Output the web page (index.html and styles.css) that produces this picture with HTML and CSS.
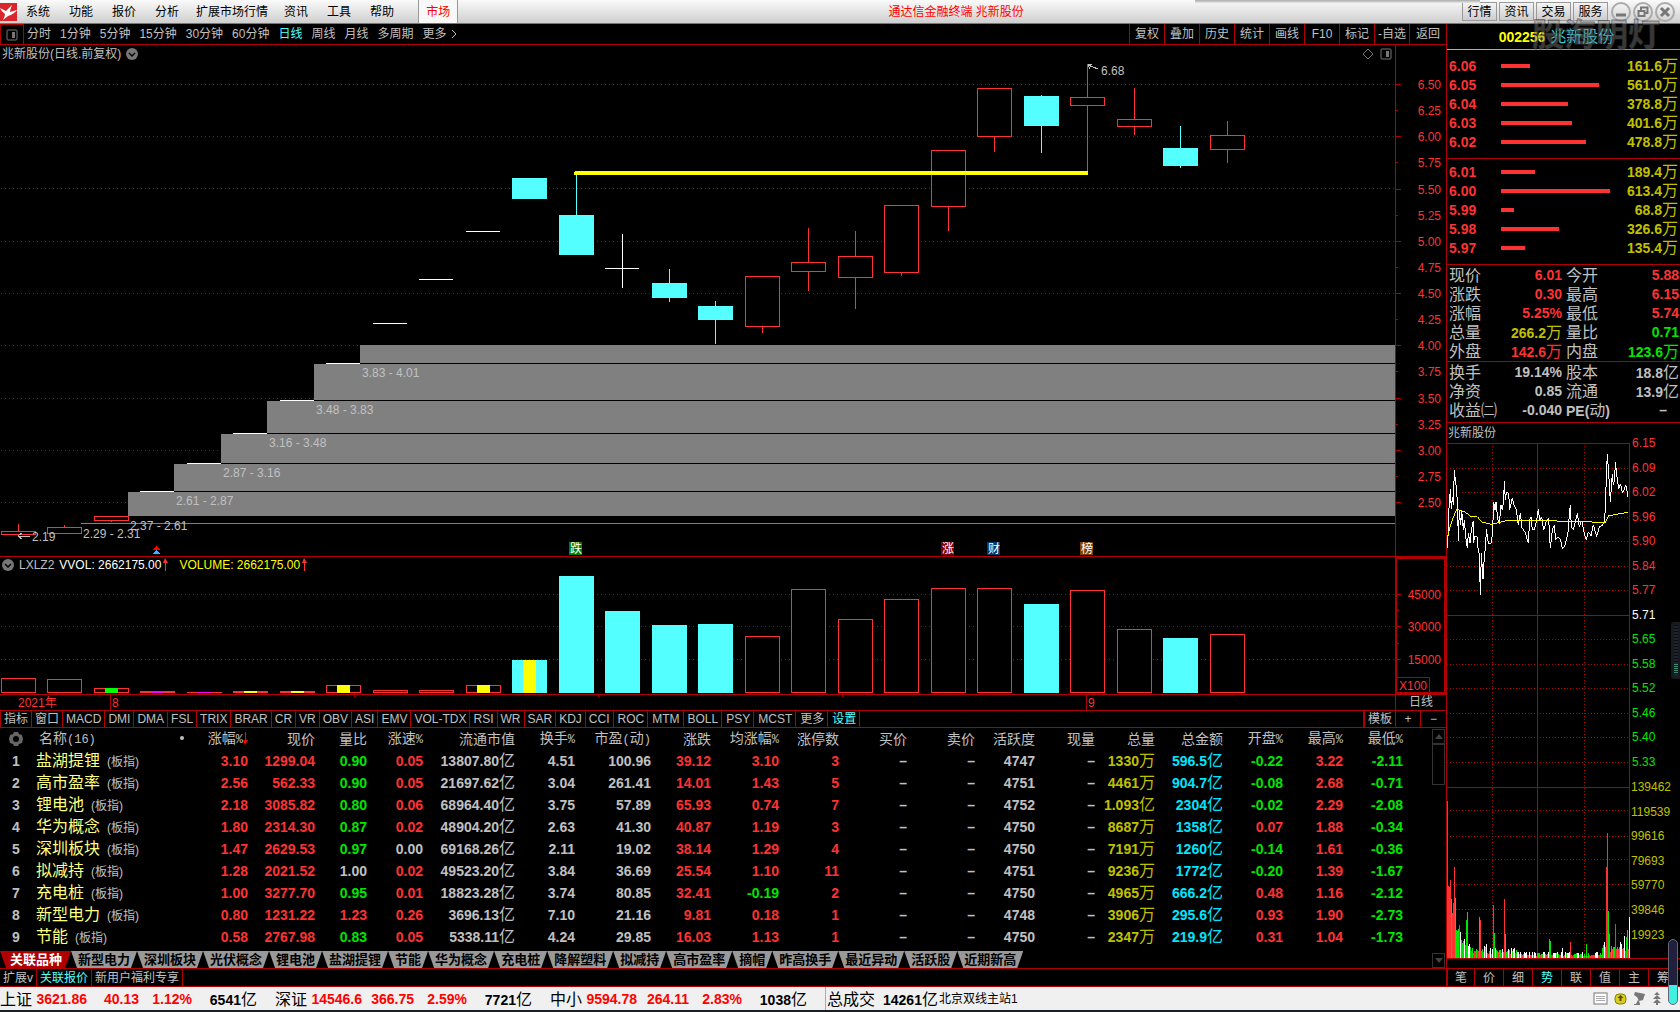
FILE: index.html
```html
<!DOCTYPE html>
<html lang="zh-CN">
<head>
<meta charset="utf-8">
<title>通达信金融终端 兆新股份</title>
<link rel="stylesheet" href="styles.css">
</head>
<body>
<header class="titlebar">
  <svg class="logo" viewBox="0 0 17 18" aria-hidden="true"><rect width="17" height="18" fill="#d8262c"/><path d="M0 5L6 8Q8 6 12 2Q10 7 10 9L17 7Q14 11 8 13L3 17Q5 13 5 11Q1 8 0 5Z" fill="#fff"/></svg>
  <nav class="menu">
    <button>系统</button><button>功能</button><button>报价</button><button>分析</button><button class="wide">扩展市场行情</button><button>资讯</button><button>工具</button><button>帮助</button><button class="market">市场</button>
  </nav>
  <h1>通达信金融终端 兆新股份</h1>
  <div class="winbuttons">
    <button>行情</button><button>资讯</button><button>交易</button><button>服务</button>
  </div>
  <div class="winctl">
    <button aria-label="最小化"><svg viewBox="0 0 22 22"><circle cx="11" cy="11" r="9"/><path d="M6 14H16" stroke-width="3"/></svg></button>
    <button aria-label="还原"><svg viewBox="0 0 22 22"><circle cx="11" cy="11" r="9"/><path d="M9 9V6.500H15.500V12H13M6.500 10H12.500V15H6.500Z" stroke-width="2"/></svg></button>
    <button aria-label="关闭"><svg viewBox="0 0 22 22"><circle cx="11" cy="11" r="9"/><path d="M7 7L15 15M15 7L7 15" stroke-width="3"/></svg></button>
  </div>
  <div class="watermark">股海明灯</div>
</header>

<main class="workspace">
  <section class="left">
    <div class="toolbar">
      <button class="panelbtn" aria-label="面板"><svg viewBox="0 0 12 12"><rect x="1" y="1" width="10" height="10" rx="1" fill="none" stroke="#777" stroke-width="1"/><rect x="6" y="3" width="3" height="6" fill="#777"/></svg></button>
      <div class="periods">
        <button>分时</button><button>1分钟</button><button>5分钟</button><button>15分钟</button><button>30分钟</button><button>60分钟</button><button class="on">日线</button><button>周线</button><button>月线</button><button>多周期</button><button>更多<svg class="chev" viewBox="0 0 6 10"><path d="M1 1L5 5L1 9" fill="none" stroke="#c0c0c0"/></svg></button>
      </div>
      <div class="actions">
        <button>复权</button><button>叠加</button><button>历史</button><button>统计</button><button>画线</button><button>F10</button><button>标记</button><button>-自选</button><button>返回</button>
      </div>
    </div>

    <div class="pane price">
      <div class="plot">
        <div class="legend">
          <span>兆新股份(日线.前复权)</span>
          <svg class="drop" viewBox="0 0 12 12"><circle cx="6" cy="6" r="6" fill="#777"/><path d="M3 5L6 8L9 5" fill="none" stroke="#000" stroke-width="1.500"/></svg>
          <span class="tools"><svg viewBox="0 0 30 12"><path d="M6 1L11 6L6 11L1 6Z" fill="none" stroke="#777"/><rect x="19" y="1" width="10" height="10" rx="1" fill="none" stroke="#777"/><rect x="24" y="3" width="3" height="6" fill="#777"/></svg></span>
        </div>
        <svg id="kline" class="kline"></svg>
      </div>
      <svg id="priceAxis" class="axis"></svg>
    </div>

    <div class="pane volume">
      <div class="plot">
        <div class="legend">
          <svg class="drop" viewBox="0 0 12 12"><circle cx="6" cy="6" r="6" fill="#777"/><path d="M3 5L6 8L9 5" fill="none" stroke="#000" stroke-width="1.500"/></svg>
          <span>LXLZ2</span>
          <span class="white">VVOL: 2662175.00<svg class="up" viewBox="0 0 5 13"><path d="M2 0L5 5H3V13H2V5H0Z" fill="#ff3232"/></svg></span>
          <span class="yellow">VOLUME: 2662175.00<svg class="up" viewBox="0 0 5 13"><path d="M2 0L5 5H3V13H2V5H0Z" fill="#ff3232"/></svg></span>
        </div>
        <svg id="vol" class="vol"></svg>
      </div>
      <div class="volaxis"><svg id="volAxis" class="axis"></svg><span class="x100">X100</span></div>
    </div>

    <div class="pane dates">
      <svg id="dates" class="datesvg"></svg>
      <div class="period">日线</div>
    </div>

    <div class="indicators">
      <button>指标</button><button>窗口</button><button>MACD</button><button>DMI</button><button>DMA</button><button>FSL</button><button>TRIX</button><button>BRAR</button><button>CR</button><button>VR</button><button>OBV</button><button>ASI</button><button>EMV</button><button>VOL-TDX</button><button>RSI</button><button>WR</button><button>SAR</button><button>KDJ</button><button>CCI</button><button>ROC</button><button>MTM</button><button>BOLL</button><button>PSY</button><button>MCST</button><button>更多</button><button class="on">设置</button>
      <div class="template"><button>模板</button><button>+</button><button>−</button></div>
    </div>

    <div class="quotes">
      <div class="quotemain">
        <table>
          <colgroup><col class="w-no"><col class="w-name"><col class="w68"><col class="w67"><col class="w52"><col class="w56"><col class="w92"><col class="w60"><col class="w76"><col class="w60"><col class="w68"><col class="w60"><col class="w68"><col class="w68"><col class="w60"><col class="w60"><col class="w60"><col class="w68"><col class="w60"><col class="w60"><col class="w60"><col></colgroup>
          <thead><tr>
            <th><svg class="gear" viewBox="0 0 14 14"><path d="M5 0H9L10 2L13 3L14 7L13 11L10 12L9 14H5L4 12L1 11L0 7L1 3L4 2Z" fill="#666"/><circle cx="7" cy="7" r="3" fill="#000"/></svg></th>
            <th class="name">名称<i>(16)</i><b class="dot"></b></th>
            <th>涨幅<i>%</i><svg class="down" viewBox="0 0 5 13"><path d="M2 13L5 8H3V0H2V8H0Z" fill="#f00"/></svg></th>
            <th>现价</th><th>量比</th><th>涨速<i>%</i></th><th>流通市值</th><th>换手<i>%</i></th><th>市盈<i>(</i>动<i>)</i></th><th>涨跌</th><th>均涨幅<i>%</i></th><th>涨停数</th><th>买价</th><th>卖价</th><th>活跃度</th><th>现量</th><th>总量</th><th>总金额</th><th>开盘<i>%</i></th><th>最高<i>%</i></th><th>最低<i>%</i></th><th></th>
          </tr></thead>
          <tbody id="rows"></tbody>
        </table>
        <div class="tabs">
          <button class="on">关联品种</button><button>新型电力</button><button>深圳板块</button><button>光伏概念</button><button>锂电池</button><button>盐湖提锂</button><button>节能</button><button>华为概念</button><button>充电桩</button><button>降解塑料</button><button>拟减持</button><button>高市盈率</button><button>摘帽</button><button>昨高换手</button><button>最近异动</button><button>活跃股</button><button>近期新高</button>
        </div>
      </div>
      <div class="scroll">
        <span class="arrow"><svg viewBox="0 0 8 5"><path d="M0 5L4 0L8 5Z" fill="#444"/></svg></span>
        <span class="thumb"></span>
        <span class="arrow end"><svg viewBox="0 0 8 5"><path d="M0 0L4 5L8 0Z" fill="#444"/></svg></span>
      </div>
    </div>

    <div class="links"><button>扩展v</button><button class="on">关联报价</button><button>新用户福利专享</button></div>
  </section>

  <aside class="side">
    <h2><b>002256</b><span>兆新股份</span></h2>
    <div class="book" id="asks"></div>
    <div class="book buy" id="bids"></div>
    <dl class="stats">
      <div><dt>现价</dt><dd class="r">6.01</dd></div><div><dt>今开</dt><dd class="r">5.88</dd></div>
      <div><dt>涨跌</dt><dd class="r">0.30</dd></div><div><dt>最高</dt><dd class="r">6.15</dd></div>
      <div><dt>涨幅</dt><dd class="r">5.25%</dd></div><div><dt>最低</dt><dd class="r">5.74</dd></div>
      <div><dt>总量</dt><dd class="y">266.2<i>万</i></dd></div><div><dt>量比</dt><dd class="g">0.71</dd></div>
      <div><dt>外盘</dt><dd class="r">142.6<i>万</i></dd></div><div><dt>内盘</dt><dd class="g">123.6<i>万</i></dd></div>
    </dl>
    <dl class="stats more">
      <div><dt>换手</dt><dd>19.14%</dd></div><div><dt>股本</dt><dd>18.8<i>亿</i></dd></div>
      <div><dt>净资</dt><dd>0.85</dd></div><div><dt>流通</dt><dd>13.9<i>亿</i></dd></div>
      <div><dt>收益㈡</dt><dd>-0.040</dd></div><div><dt><b>PE(</b>动<b>)</b></dt><dd class="dash">–</dd></div>
    </dl>
    <h3>兆新股份</h3>
    <svg id="intraday" class="intraday"></svg>
    <div class="sidetabs"><button>笔</button><button>价</button><button>细</button><button class="on">势</button><button>联</button><button>值</button><button>主</button><button>筹</button></div>
    <div class="handle"></div>
    <div class="gauge"></div>
  </aside>
</main>

<footer class="status">
  <div class="index"><span>上证</span><b class="r">3621.86</b><b class="r">40.13</b><b class="r">1.12%</b><b>6541<i>亿</i></b></div>
  <div class="index"><span>深证</span><b class="r">14546.6</b><b class="r">366.75</b><b class="r">2.59%</b><b>7721<i>亿</i></b></div>
  <div class="index"><span>中小</span><b class="r">9594.78</b><b class="r">264.11</b><b class="r">2.83%</b><b>1038<i>亿</i></b></div>
  <div class="total"><span>总成交</span><b>14261<i>亿</i></b></div>
  <div class="server">北京双线主站1</div>
  <div class="trayicons">
    <svg viewBox="0 0 15 13"><rect x="1" y="1" width="13" height="11" fill="#fff" stroke="#777"/><path d="M3 4.500H12M3 6.500H12M3 8.500H12" stroke="#aaa"/></svg>
    <svg viewBox="0 0 13 13"><rect x="1" y="2" width="11" height="10" rx="4" fill="#d8cc20" stroke="#8a8000"/><path d="M6.500 3L9.500 6H7.500V9H5.500V6H3.500Z" fill="#554d00"/></svg>
    <svg viewBox="0 0 13 13"><path d="M2 0L12 2L10 8L6 9L4 5L1 3ZM5 8L3 12H1V13H7V12L6 9ZM9 7L12 10" fill="#777"/></svg>
    <svg viewBox="0 0 10 13"><path d="M5 0L8 3H2ZM5 3L9 7H1ZM5 7L9 11H1ZM4 10H6V13H4Z" fill="#777"/></svg>
  </div>
</footer>
<script src="app.js"></script>
</body>
</html>
```
FILE: styles.css
```css
* { box-sizing: border-box; }
body {
  margin: 0;
  background: #000;
  color: #c0c0c0;
  font: 12px/16px "Liberation Sans", "Noto Sans CJK SC", sans-serif;
  overflow-x: hidden;
}
button {
  margin: 0;
  padding: 0;
  border: 0;
  background: none;
  color: inherit;
  font: inherit;
  white-space: nowrap;
}
i { font-style: normal; }
h1, h2, h3, dl, dd { margin: 0; font-weight: 400; }
.on { color: #54ffff; }
.r { color: #ff3232; }
.g { color: #00e600; }
.y { color: #c0c000; }
.white { color: #fff; }
.yellow { color: #ff0; }

/* title bar */
.titlebar {
  position: relative;
  display: flex;
  align-items: center;
  height: 24px;
  background: linear-gradient(#fafafa, #cfcfcf);
  border-bottom: 1px solid #777;
  color: #000;
}
.titlebar::after {
  content: "";
  position: absolute;
  right: 200px;
  top: 0;
  width: 285px;
  height: 3px;
  background: linear-gradient(#aaa, #e8e8e8);
}
.logo { width: 17px; height: 18px; }
.menu { display: flex; align-items: stretch; height: 23px; }
.menu button { padding: 0 10px 0 9px; }
.menu .wide { padding: 0 7px; }
.menu .market {
  margin-left: 14px;
  padding: 0 7px;
  background: #f8f8f8;
  border-left: 1px solid #999;
  border-right: 1px solid #999;
  color: #f00;
}
.titlebar h1 { flex: 1; padding-right: 8px; text-align: center; font-size: 12px; color: #f00; }
.winbuttons { display: flex; gap: 2px; }
.winbuttons button { width: 35px; height: 19px; border: 1px solid #999; background: linear-gradient(#f4f4f4, #ccc); }
.winctl { display: flex; padding: 0 4px 0 2px; }
.winctl button { height: 22px; }
.winctl svg { display: block; width: 22px; height: 22px; fill: none; stroke: #777; }
.winctl circle { stroke: #aaa; stroke-width: 2; }
.watermark {
  position: absolute;
  z-index: 3;
  right: 20px;
  top: 14px;
  font-size: 32px;
  line-height: 42px;
  font-weight: 700;
  color: #80808070;
  -webkit-text-stroke: 1px #30303080;
  pointer-events: none;
}

.workspace { display: grid; grid-template-columns: minmax(0, 1fr) 234px; }

/* period toolbar */
.toolbar { display: flex; height: 21px; border-bottom: 1px solid #b00000; }
.panelbtn { width: 24px; border: 1px solid #b00000; border-bottom: 0; }
.panelbtn svg { display: block; width: 12px; height: 12px; margin: auto; }
.periods { display: flex; gap: 9px; padding-left: 3px; }
.chev { width: 6px; height: 10px; margin-left: 4px; vertical-align: -1px; }
.actions { display: flex; margin-left: auto; }
.actions button { width: 35px; border-left: 1px solid #b00000; }
.actions button:last-child { width: 37px; }

/* chart panes */
.pane { display: grid; grid-template-columns: minmax(0, 1fr) 51px; border-bottom: 1px solid #b00000; }
.plot { min-width: 0; }
.legend { display: flex; align-items: center; gap: 5px; height: 18px; padding-left: 2px; }
.volume .legend { height: 16px; margin-bottom: 2px; }
.drop { width: 12px; height: 12px; }
.tools { margin-left: auto; padding-right: 3px; }
.tools svg { display: block; width: 30px; height: 12px; }
.legend .yellow { padding-left: 6px; }
.up { width: 5px; height: 13px; margin-left: 2px; vertical-align: -2px; }
.pane svg text { font-size: 12px; }
.kline { display: block; width: 100%; height: 493px; }
.vol { display: block; width: 100%; height: 119px; }
.axis { display: block; width: 51px; height: 511px; border-left: 1px solid #b00000; }
.volume .axis { width: 47px; height: 133px; border: 0; }
.volaxis { position: relative; border: 2px solid #b00000; }
.x100 { position: absolute; left: 0; bottom: -2px; padding: 0 2px; line-height: 16px; border: 1px solid #b00000; border-left: 0; border-bottom: 0; color: #ff3232; }
.datesvg { display: block; width: 100%; height: 15px; }
.period { border-left: 1px solid #b00000; text-align: center; line-height: 15px; }

.indicators { display: flex; height: 17px; border-bottom: 1px solid #b00000; border-left: 1px solid #b00000; line-height: 16px; }
.indicators button { padding: 0 3px; border-right: 1px solid #b00000; }
.indicators > button:nth-child(n+20) { padding-left: 4px; }
.template { display: flex; margin-left: auto; border-left: 2px solid #b00000; }
.template button + button { width: 25px; }
.template button:last-child { border-right: 0; }

/* quote table */
.quotes { display: grid; grid-template-columns: minmax(0, 1fr) 14px; border-bottom: 1px solid #b00000; }
table { width: 100%; table-layout: fixed; border-collapse: collapse; font-size: 14px; line-height: 20px; }
tr { height: 22px; }
th, td { padding: 0; text-align: right; font-weight: 400; white-space: nowrap; }
td { font-weight: 700; }
th:first-child, td:first-child { text-align: center; }
th i { font-family: "Liberation Mono", monospace; font-size: 12px; }
td i { font-weight: 400; font-size: 16px; }
th.name { text-align: left; padding-left: 7px; }
td.name { text-align: left; padding-left: 4px; font-weight: 400; font-size: 16px; color: #ffff80; }
td.name small { margin-left: 7px; font-size: 12px; color: #c0c0c0; }
.dot { display: inline-block; width: 4px; height: 4px; margin-left: 84px; vertical-align: 3px; border-radius: 2px; background: #c0c0c0; }
.gear { width: 14px; height: 14px; vertical-align: -2px; }
.down { width: 5px; height: 13px; vertical-align: -2px; }
.c { color: #00e6ff; }
.w-no { width: 32px; }
.w-name { width: 148px; }
.w52 { width: 52px; }
.w56 { width: 56px; }
.w60 { width: 60px; }
.w67 { width: 67px; }
.w68 { width: 68px; }
.w76 { width: 76px; }
.w92 { width: 92px; }

.tabs { display: flex; padding: 3px 0 0; }
.tabs button {
  height: 17px;
  padding: 0 7px;
  background: #999;
  color: #000;
  font-size: 13px;
  line-height: 16px;
  font-weight: 700;
  clip-path: polygon(0 0, 100% 0, calc(100% - 6px) 100%, 6px 100%);
}
.tabs .on { padding: 0 9px 0 10px; background: #b00000; color: #fff; }
.scroll { display: flex; flex-direction: column; padding: 1px 1px 0 0; }
.arrow { display: grid; place-items: center; height: 15px; border: 1px solid #333; }
.arrow svg { width: 8px; height: 5px; }
.end { margin-top: auto; }
.thumb { height: 41px; border: 1px solid #333; }
.links { display: flex; height: 18px; border-bottom: 1px solid #b00000; }
.links button { padding: 0 3px; border-right: 1px solid #b00000; }

/* side panel */
.side { position: relative; display: flex; flex-direction: column; border-left: 1px solid #b00000; }
.side h2 {
  display: flex;
  justify-content: center;
  align-items: center;
  gap: 5px;
  height: 26px;
  padding-right: 14px;
  border-bottom: 1px solid;
  border-image: linear-gradient(90deg, #ffa030, #ffa030 30%, #40a0ff 60%) 1;
  font-size: 16px;
}
.side h2 b { font-size: 14px; color: #ff0; }
.side h2 span { color: #30d0e0; }
.book { padding: 6px 2px 7px; border-bottom: 1px solid #b00000; }
.buy { padding: 3px 2px 7px; }
.level { display: grid; grid-template-columns: 52px 1fr auto; align-items: center; height: 19px; font-size: 14px; font-weight: 700; }
.bar { height: 4px; background: #ff3232; }
.level i, dd i { font-size: 16px; font-weight: 400; }
.stats { display: grid; grid-template-columns: 117px 1fr; padding: 1px 1px 0 2px; border-bottom: 1px solid #b00000; font-size: 16px; line-height: 19px; }
.more { padding-bottom: 2px; }
.stats div { display: flex; height: 19px; justify-content: space-between; }
.stats div:nth-child(odd) { padding-right: 4px; }
.stats dd, .stats b { font-size: 14px; font-weight: 700; }
.stats .dash { padding-right: 12px; }
.side h3 { height: 20px; padding-left: 1px; font-size: 12px; line-height: 20px; }
.intraday { display: block; width: 233px; height: 525px; overflow: visible; }
.intraday text { font-size: 12px; }
.sidetabs { display: flex; height: 19px; border-top: 1px solid #b00000; border-bottom: 1px solid #b00000; overflow: hidden; }
.sidetabs button { flex: 0 0 29px; border-left: 1px solid #b00000; }
.sidetabs button:first-child { flex-basis: 27px; }
.handle {
  position: absolute;
  right: 0;
  top: 598px;
  width: 9px;
  height: 57px;
  border-radius: 3px 0 0 3px;
  background: repeating-linear-gradient(#0a0c10 0 1px, #20242c 1px 3px);
  border: 3px solid #181a22;
  border-right-width: 2px;
}
.handle::after { content: ""; position: absolute; right: 0; bottom: 2px; width: 4px; height: 10px; background: repeating-linear-gradient(#3c8c70 0 1px, #12221e 1px 2px); }
.gauge {
  position: absolute;
  z-index: 2;
  right: 2px;
  top: 915px;
  width: 10px;
  height: 66px;
  border: 1px solid #667;
  border-radius: 5px;
  background: linear-gradient(#20203c 70%, #40f0e0 70%);
}

/* status bar */
.status { display: flex; height: 25px; border-bottom: 2px solid #1a1d26; background: #f0f0f0; color: #000; font-size: 14px; line-height: 25px; }
.status span, .status i { font-size: 16px; font-weight: 400; }
.index { display: grid; grid-template-columns: 35px 52px 52px 53px 65px; margin-right: 18px; text-align: right; white-space: nowrap; }
.index span { text-align: left; }
.status .r { color: #f00; }
.total { display: flex; gap: 8px; width: 109px; padding-left: 1px; border-left: 1px solid #aaa; white-space: nowrap; }
.server { padding-left: 5px; font-size: 12px; }
.trayicons { display: flex; align-items: center; gap: 6px; margin-left: auto; padding-right: 18px; }
.trayicons svg { height: 13px; }
```
FILE: app.js
```js
const RED = '#ff3232', GRID = '#b00000', CYAN = '#54ffff', GREY = '#c0c0c0';
const rect = (x, y, w, h, fill) => `<rect x="${x}" y="${y}" width="${w}" height="${h}" fill="${fill}"/>`;
const hollow = (x, y, w, h) => `<rect x="${x + 0.5}" y="${y + 0.5}" width="${w - 1}" height="${h - 1}" fill="#000" stroke="${RED}"/>`;
const dots = y => `<line x1="1" x2="100%" y1="${y + 0.5}" y2="${y + 0.5}" stroke="${GRID}" stroke-dasharray="1 3"/>`;
const label = (x, y, s, fill, extra = '') => `<text x="${x}" y="${y + 4}" fill="${fill}" ${extra}>${s}</text>`;
const barX = i => Math.floor(1 + 46.5 * i);

/* daily candles: [kind, high, open/close top, open/close bottom, low] in chart space */
const candles = [
  ['r', 524, 531, 535, 535], ['r', 525, 527, 534, 534], ['r', 516, 516, 521, 522],
  ['w', 491], ['w', 463], ['w', 433], ['w', 400], ['w', 363], ['w', 323], ['w', 279], ['w', 231],
  ['c', 178, 178, 199, 199], ['c', 172, 215, 255, 255], ['x', 234, 268, 268, 288],
  ['c', 269, 283, 298, 302], ['c', 301, 306, 320, 344], ['r', 276, 276, 327, 333],
  ['r', 228, 262, 272, 291], ['r', 231, 256, 278, 309], ['r', 205, 205, 273, 276],
  ['r', 150, 150, 207, 231], ['r', 88, 88, 137, 152], ['c', 95, 96, 126, 153],
  ['r', 64, 97, 106, 172], ['r', 88, 119, 127, 135], ['c', 126, 148, 166, 168], ['r', 121, 135, 150, 163]
];
const gridY = [84, 136, 188, 241, 293, 345, 398, 450, 502];
let k = gridY.map(dots).join('');
[[360, 345, 363], [314, 364, 400], [267, 401, 433], [221, 434, 463], [174, 464, 491], [128, 492, 516]]
  .forEach(([x, a, b]) => {
    k += `<rect x="${x}" y="${a}" width="100%" height="${b - a}" fill="#808080"/>`;
    k += `<rect x="${x}" y="${b}" width="100%" height="1" fill="#000"/>`;
  });
k += `<rect x="81" y="523" width="100%" height="1" fill="#808080"/>`;
candles.forEach(([t, hi, a, b, lo], i) => {
  const x = barX(i);
  if (t === 'w') { k += rect(x, hi, 34, 1, '#fff'); return; }
  if (t === 'x') { k += rect(x, a, 34, 1, '#fff') + rect(x + 17, hi, 1, lo - hi, '#fff'); return; }
  k += rect(x + 17, hi, 1, lo - hi, t === 'c' ? CYAN : RED);
  k += t === 'c' ? rect(x, a, 35, b - a, CYAN) : hollow(x, a, 35, b - a);
});
k += rect(575, 171, 513, 1, '#ff0') + rect(574, 172, 514, 3, '#ff0');
k += `<path d="M1088 65L1098 69M1088 65L1092 64M1088 65L1090 69" stroke="${GREY}" fill="none"/>` + label(1101, 71, '6.68', GREY);
k += `<path d="M18 536H30M18 536L22 533M18 536L22 539" stroke="${GREY}" fill="none"/>` + label(32, 537, '2.19', GREY);
[[362, 373, '3.83 - 4.01'], [316, 410, '3.48 - 3.83'], [269, 443, '3.16 - 3.48'], [223, 473, '2.87 - 3.16'],
 [176, 501, '2.61 - 2.87'], [130, 526, '2.37 - 2.61'], [83, 534, '2.29 - 2.31']]
  .forEach(([x, y, s]) => { k += label(x, y, s, GREY); });
k += `<path d="M156 546L160 550H152Z" fill="#f00"/><path d="M156 550L160 554H152Z" fill="#40b0ff"/>`;
[[569, '跌', '#008000'], [941, '涨', '#800000'], [987, '财', '#003a70'], [1080, '榜', '#804000']]
  .forEach(([x, s, c]) => { k += rect(x, 542, 13, 13, c) + label(x + 1, 549, s, '#fff'); });
kline.innerHTML = `<g transform="translate(0 -63)" shape-rendering="crispEdges">${k}</g>`;

/* price scale */
let pa = '';
for (let i = 0; i <= 16; i++) {
  const y = Math.round(84 + i * 26.13) - 45;
  pa += rect(0, y, i % 2 ? 2 : 5, 1, GRID) + label(45, y + 1, (6.5 - i * 0.25).toFixed(2), RED, 'text-anchor="end"');
}
priceAxis.innerHTML = pa;

/* volume bars: [kind, top, accent colour] */
const volumes = [
  ['r', 678], ['r', 679], ['r', 688, '#0f0'], ['f', 691, '#f0f'], ['f', 692, '#f0f'], ['f', 691, '#ff0'], ['f', 691, '#ff0'],
  ['r', 685, '#ff0'], ['r', 690], ['r', 690], ['r', 685, '#ff0'], ['c', 660, '#ff0'], ['c', 576], ['c', 611], ['c', 625],
  ['c', 624], ['r', 636], ['r', 589], ['r', 619], ['r', 599], ['r', 588], ['r', 588], ['c', 604], ['r', 590], ['r', 629], ['c', 638], ['r', 634]
];
let v = [594, 626, 659].map(dots).join('');
volumes.forEach(([t, top, accent], i) => {
  const x = barX(i), h = 693 - top;
  v += t === 'r' ? hollow(x, top, 35, h) : rect(x, top, 35, h, t === 'c' ? CYAN : RED);
  if (accent) v += rect(x + 11, top, 13, h, accent);
});
vol.innerHTML = `<g transform="translate(0 -575)" shape-rendering="crispEdges">${v}</g>`;
volAxis.innerHTML = [[594, '45000'], [626, '30000'], [659, '15000']]
  .map(([y, s]) => rect(0, y - 559, 4, 1, GRID) + label(44, y - 558, s, RED, 'text-anchor="end"')).join('')
  + rect(0, 51, 2, 1, GRID) + rect(0, 84, 2, 1, GRID);
dates.innerHTML = label(18, 8, '2021年', RED) + rect(110, 0, 1, 15, GRID) + label(112, 8, '8', RED)
  + rect(1086, 0, 1, 15, GRID) + label(1088, 8, '9', RED)
  + [354, 598, 842].map(x => rect(x, 0, 1, 2, GRID)).join('');

/* quote rows */
const data = `盐湖提锂 3.10 1299.04 0.90 0.05 13807.80亿 4.51 100.96 39.12 3.10 3 4747 1330万 596.5亿 -0.22 3.22 -2.11
高市盈率 2.56 562.33 0.90 0.05 21697.62亿 3.04 261.41 14.01 1.43 5 4751 4461万 904.7亿 -0.08 2.68 -0.71
锂电池 2.18 3085.82 0.80 0.06 68964.40亿 3.75 57.89 65.93 0.74 7 4752 1.093亿 2304亿 -0.02 2.29 -2.08
华为概念 1.80 2314.30 0.87 0.02 48904.20亿 2.63 41.30 40.87 1.19 3 4750 8687万 1358亿 0.07 1.88 -0.34
深圳板块 1.47 2629.53 0.97 0.00 69168.26亿 2.11 19.02 38.14 1.29 4 4750 7191万 1260亿 -0.14 1.61 -0.36
拟减持 1.28 2021.52 1.00 0.02 49523.20亿 3.84 36.69 25.54 1.10 11 4751 9236万 1772亿 -0.20 1.39 -1.67
充电桩 1.00 3277.70 0.95 0.01 18823.28亿 3.74 80.85 32.41 -0.19 2 4750 4965万 666.2亿 0.48 1.16 -2.12
新型电力 0.80 1231.22 1.23 0.26 3696.13亿 7.10 21.16 9.81 0.18 1 4748 3906万 295.6亿 0.93 1.90 -2.73
节能 0.58 2767.98 0.83 0.05 5338.11亿 4.24 29.85 16.03 1.13 1 4750 2347万 219.9亿 0.31 1.04 -1.73`;
const sign = s => s > 0 ? 'r' : s < 0 ? 'g' : '';
const unit = s => s.replace(/[万亿]/, '<i>$&</i>');
rows.innerHTML = data.split('\n').map((line, n) => {
  const d = line.split(' ');
  const cells = [
    [d[1], sign(d[1])], [d[2], 'r'], [d[3], sign(d[3] - 1)], [d[4], sign(d[4])], [d[5], ''], [d[6], ''], [d[7], ''],
    [d[8], 'r'], [d[9], sign(d[9])], [d[10], 'r'], ['–', ''], ['–', ''], [d[11], ''], ['–', ''], [d[12], 'y'], [d[13], 'c'],
    [d[14], sign(d[14])], [d[15], sign(d[15])], [d[16], sign(d[16])], ['', '']
  ];
  return `<tr><td>${n + 1}</td><td class="name">${d[0]}<small>(板指)</small></td>`
    + cells.map(([s, c]) => `<td class="${c}">${unit(s)}</td>`).join('') + '</tr>';
}).join('');

/* order book */
const book = list => list.map(([p, w, q]) =>
  `<div class="level"><span class="r">${p}</span><span class="bar" style="width:${w}px"></span><span class="y">${q}<i>万</i></span></div>`).join('');
asks.innerHTML = book([['6.06', 29, '161.6'], ['6.05', 98, '561.0'], ['6.04', 67, '378.8'], ['6.03', 71, '401.6'], ['6.02', 85, '478.8']]);
bids.innerHTML = book([['6.01', 34, '189.4'], ['6.00', 109, '613.4'], ['5.99', 13, '68.8'], ['5.98', 58, '326.6'], ['5.97', 24, '135.4']]);

/* intraday chart */
const W = 182;
const hline = (y, dotted) => `<line x1="0" x2="${W}" y1="${y + 0.5}" y2="${y + 0.5}" stroke="${GRID}" ${dotted ? 'stroke-dasharray="1 2"' : ''}/>`;
const vline = (x, dotted) => `<line x1="${x + 0.5}" x2="${x + 0.5}" y1="0" y2="515" stroke="${GRID}" ${dotted ? 'stroke-dasharray="1 2"' : ''}/>`;
let s = [0, 172, 344, 515].map(y => hline(y)).join('')
  + [25, 49, 74, 98, 123, 147, 196, 221, 245, 270, 294, 319, 367, 393, 416, 441, 466, 490].map(y => hline(y, true)).join('')
  + vline(45, true) + vline(90) + vline(137, true) + vline(W);
s += hline(515).replace(`x2="${W}"`, 'x2="233"');

const peaks = { 0: [157, 'r'], 1: [72, 'r'], 2: [71, 'r'], 3: [78, 'r'], 4: [59, 'g'], 5: [45, 'r'], 6: [55, 'r'], 7: [91, 'r'], 8: [60, 'g'], 9: [28, 'g'],
  10: [27, 'g'], 11: [29, 'g'], 12: [33, 'r'], 13: [26, 'w'], 19: [38, 'g'], 20: [46, 'g'], 32: [41, 'g'], 33: [38, 'r'], 46: [53, 'r'], 47: [25, 'g'],
  57: [59, 'r'], 58: [24, 'g'], 102: [19, 'g'], 103: [17, 'g'], 115: [10, 'w'], 123: [16, 'r'], 139: [14, 'g'], 159: [91, 'r'], 160: [125, 'r'],
  161: [47, 'g'], 162: [24, 'g'], 168: [34, 'r'], 177: [22, 'w'], 179: [21, 'g'], 180: [28, 'g'], 182: [41, 'w'] };
const paint = { r: RED, g: '#00e600', w: '#fff' };
let seed = 7;
for (let x = 0; x <= W; x++) {
  seed = (seed * 73 + 41) % 997;
  const n = seed / 997;
  const base = x < 20 ? 22 : x < 40 ? 14 : x < 70 ? 10 : x < 155 ? 6 : 16;
  const [h, c] = peaks[x] || [Math.round(base * (0.35 + n * 0.7)), n < 0.35 ? 'r' : n < 0.7 ? 'g' : 'w'];
  s += rect(x, 515 - h, 1, h, paint[c]);
}
/* traces in thirds of a pixel, offset from the plot's top-left corner */
const trace = (pts, color) => `<polyline transform="scale(.3333)" fill="none" stroke-width="3" stroke="${color}" points="${pts}"/>`;
s += trace('1,316 4,261 6,196 10,139 13,198 16,161 19,186 22,81 25,111 29,141 32,201 34,294 37,201 41,246 44,201 49,261 52,231 56,281 61,316 64,271 69,301 73,261 79,233 80,301 82,281 90,281 93,316 97,336 100,456 103,331 108,409 112,341 116,306 118,258 124,301 133,301 137,261 140,176 144,201 147,176 152,226 157,244 162,186 166,201 170,171 172,114 175,171 178,148 185,151 188,201 196,164 201,186 208,201 214,246 220,211 225,256 234,266 244,301 248,231 252,223 256,261 262,261 270,226 274,199 278,231 284,223 290,261 299,231 305,226 310,316 316,261 322,246 326,291 332,281 341,291 346,316 352,313 359,286 364,261 367,211 370,187 373,251 379,261 385,236 391,211 397,251 404,233 412,271 418,291 424,266 432,279 439,246 449,281 457,251 465,248 471,240 475,201 478,99 481,33 486,105 490,177 496,93 499,126 503,111 505,57 509,93 515,138 521,122 526,150 532,138 537,127 543,162', '#fff');
s += trace('1,286 9,251 19,223 29,199 54,207 69,219 91,221 104,237 134,244 179,233 194,232 310,232 339,235 414,236 474,239 484,219 514,213 544,208', '#ff0');
const prices = ['6.15', '6.09', '6.02', '5.96', '5.90', '5.84', '5.77', '5.71', '5.65', '5.58', '5.52', '5.46', '5.40', '5.33'];
prices.forEach((p, i) => { s += label(185, Math.round(i * 24.5), p, i < 7 ? RED : i > 7 ? '#00e600' : '#fff'); });
['139462', '119539', '99616', '79693', '59770', '39846', '19923'].forEach((p, i) => { s += label(184, Math.round(344 + i * 24.6), p, '#c0c000'); });
intraday.innerHTML = `<g shape-rendering="crispEdges">${s}</g>`;
```
